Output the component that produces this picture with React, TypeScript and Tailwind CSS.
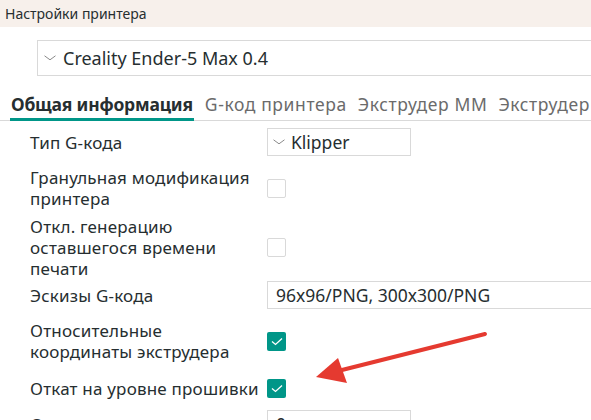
import React from "react";

const FONT = { fontFamily: '"Noto Sans", "DejaVu Sans", sans-serif' };

const Chevron = () => (
  <svg width="12" height="6" viewBox="0 0 12 6" className="shrink-0">
    <path d="M0.5 0.8 L6 4.8 L11.5 0.8" fill="none" stroke="#8a8a8a" strokeWidth="1" />
  </svg>
);

const Check = ({ on }: { on: boolean }) =>
  on ? (
    <div className="w-[19px] h-[19px] rounded-[2px] bg-[#009688] flex items-center justify-center">
      <svg width="12" height="9" viewBox="0 0 12 9">
        <path d="M1 4.5 L4.5 7.5 L11 1.5" fill="none" stroke="#ffffff" strokeWidth="1.3" />
      </svg>
    </div>
  ) : (
    <div className="w-[19px] h-[19px] rounded-[2px] border border-[#d9d9d9] bg-white" />
  );

const Row = ({
  label,
  children,
  className,
}: {
  label: React.ReactNode;
  children: React.ReactNode;
  className: string;
}) => (
  <div className={`flex items-center ${className}`}>
    <div className="w-[237px] shrink-0 text-[17px] tracking-[0.2px] leading-[21px] text-[#262e30]">{label}</div>
    <div className="flex-1 flex items-center">{children}</div>
  </div>
);

export default function App() {
  return (
    <div className="relative w-[591px] h-[420px] overflow-hidden bg-white" style={FONT}>
      <div className="h-[27px] bg-[#f7f0eb] flex items-center pl-[5px] text-[14px] text-[#262e30]">
        Настройки принтера
      </div>

      <div className="mt-[13px] ml-[37px] h-[36px] border border-r-0 border-[#d9d9d9] flex items-center pl-[6px] gap-[7px]">
        <Chevron />
        <span className="text-[18px] text-[#262e30]">Creality Ender-5 Max 0.4</span>
      </div>

      <div className="mt-[16px] border-b border-[#d9d9d9] flex items-end gap-[11px] pl-[10px] text-[17.5px] leading-[24px] whitespace-nowrap">
        <div className="pb-[2px] border-b-[3px] border-[#009688] font-bold tracking-[-0.2px] text-[#262e30] px-[1px] -mb-[1px]">
          Общая информация
        </div>
        <div className="pb-[4px] tracking-[0.6px] text-[#6b6b6b]">G-код принтера</div>
        <div className="pb-[4px] tracking-[0.6px] text-[#6b6b6b]">Экструдер ММ</div>
        <div className="pb-[4px] tracking-[0.6px] text-[#6b6b6b]">Экструдер</div>
      </div>

      <div className="pl-[30px] flex flex-col">
        <Row label="Тип G-кода" className="mt-[7px]">
          <div className="w-[144px] h-[28px] border border-[#d9d9d9] flex items-center pl-[5px] gap-[6px]">
            <Chevron />
            <span className="text-[17.5px] tracking-normal text-[#262e30]">Klipper</span>
          </div>
        </Row>
        <Row label={<>Гранульная модификация<br />принтера</>} className="mt-[11px]">
          <Check on={false} />
        </Row>
        <Row label={<>Откл. генерацию<br />оставшегося времени<br />печати</>} className="mt-[7px]">
          <Check on={false} />
        </Row>
        <Row label="Эскизы G-кода" className="mt-[2px]">
          <div className="flex-1 h-[28px] border border-r-0 border-[#d9d9d9] flex items-center pl-[8px] text-[17.5px] tracking-normal text-[#262e30]">
            96x96/PNG, 300x300/PNG
          </div>
        </Row>
        <Row label={<>Относительные<br />координаты экструдера</>} className="mt-[11px]">
          <Check on={true} />
        </Row>
        <Row label={<span className="whitespace-nowrap">Откат на уровне прошивки</span>} className="mt-[16px]">
          <Check on={true} />
        </Row>
        <Row label="Скорость" className="mt-[11px]">
          <div className="w-[144px] h-[28px] border border-[#d9d9d9] flex items-center pl-[8px] text-[17.5px] text-[#262e30]">
            0
          </div>
        </Row>
      </div>

      <svg className="absolute left-0 top-0 pointer-events-none" width="591" height="420">
        <line x1="485" y1="334" x2="338" y2="371" stroke="#e53a30" strokeWidth="4" strokeLinecap="round" />
        <polygon points="316,377 338,358 347,383" fill="#e53a30" />
      </svg>
    </div>
  );
}
